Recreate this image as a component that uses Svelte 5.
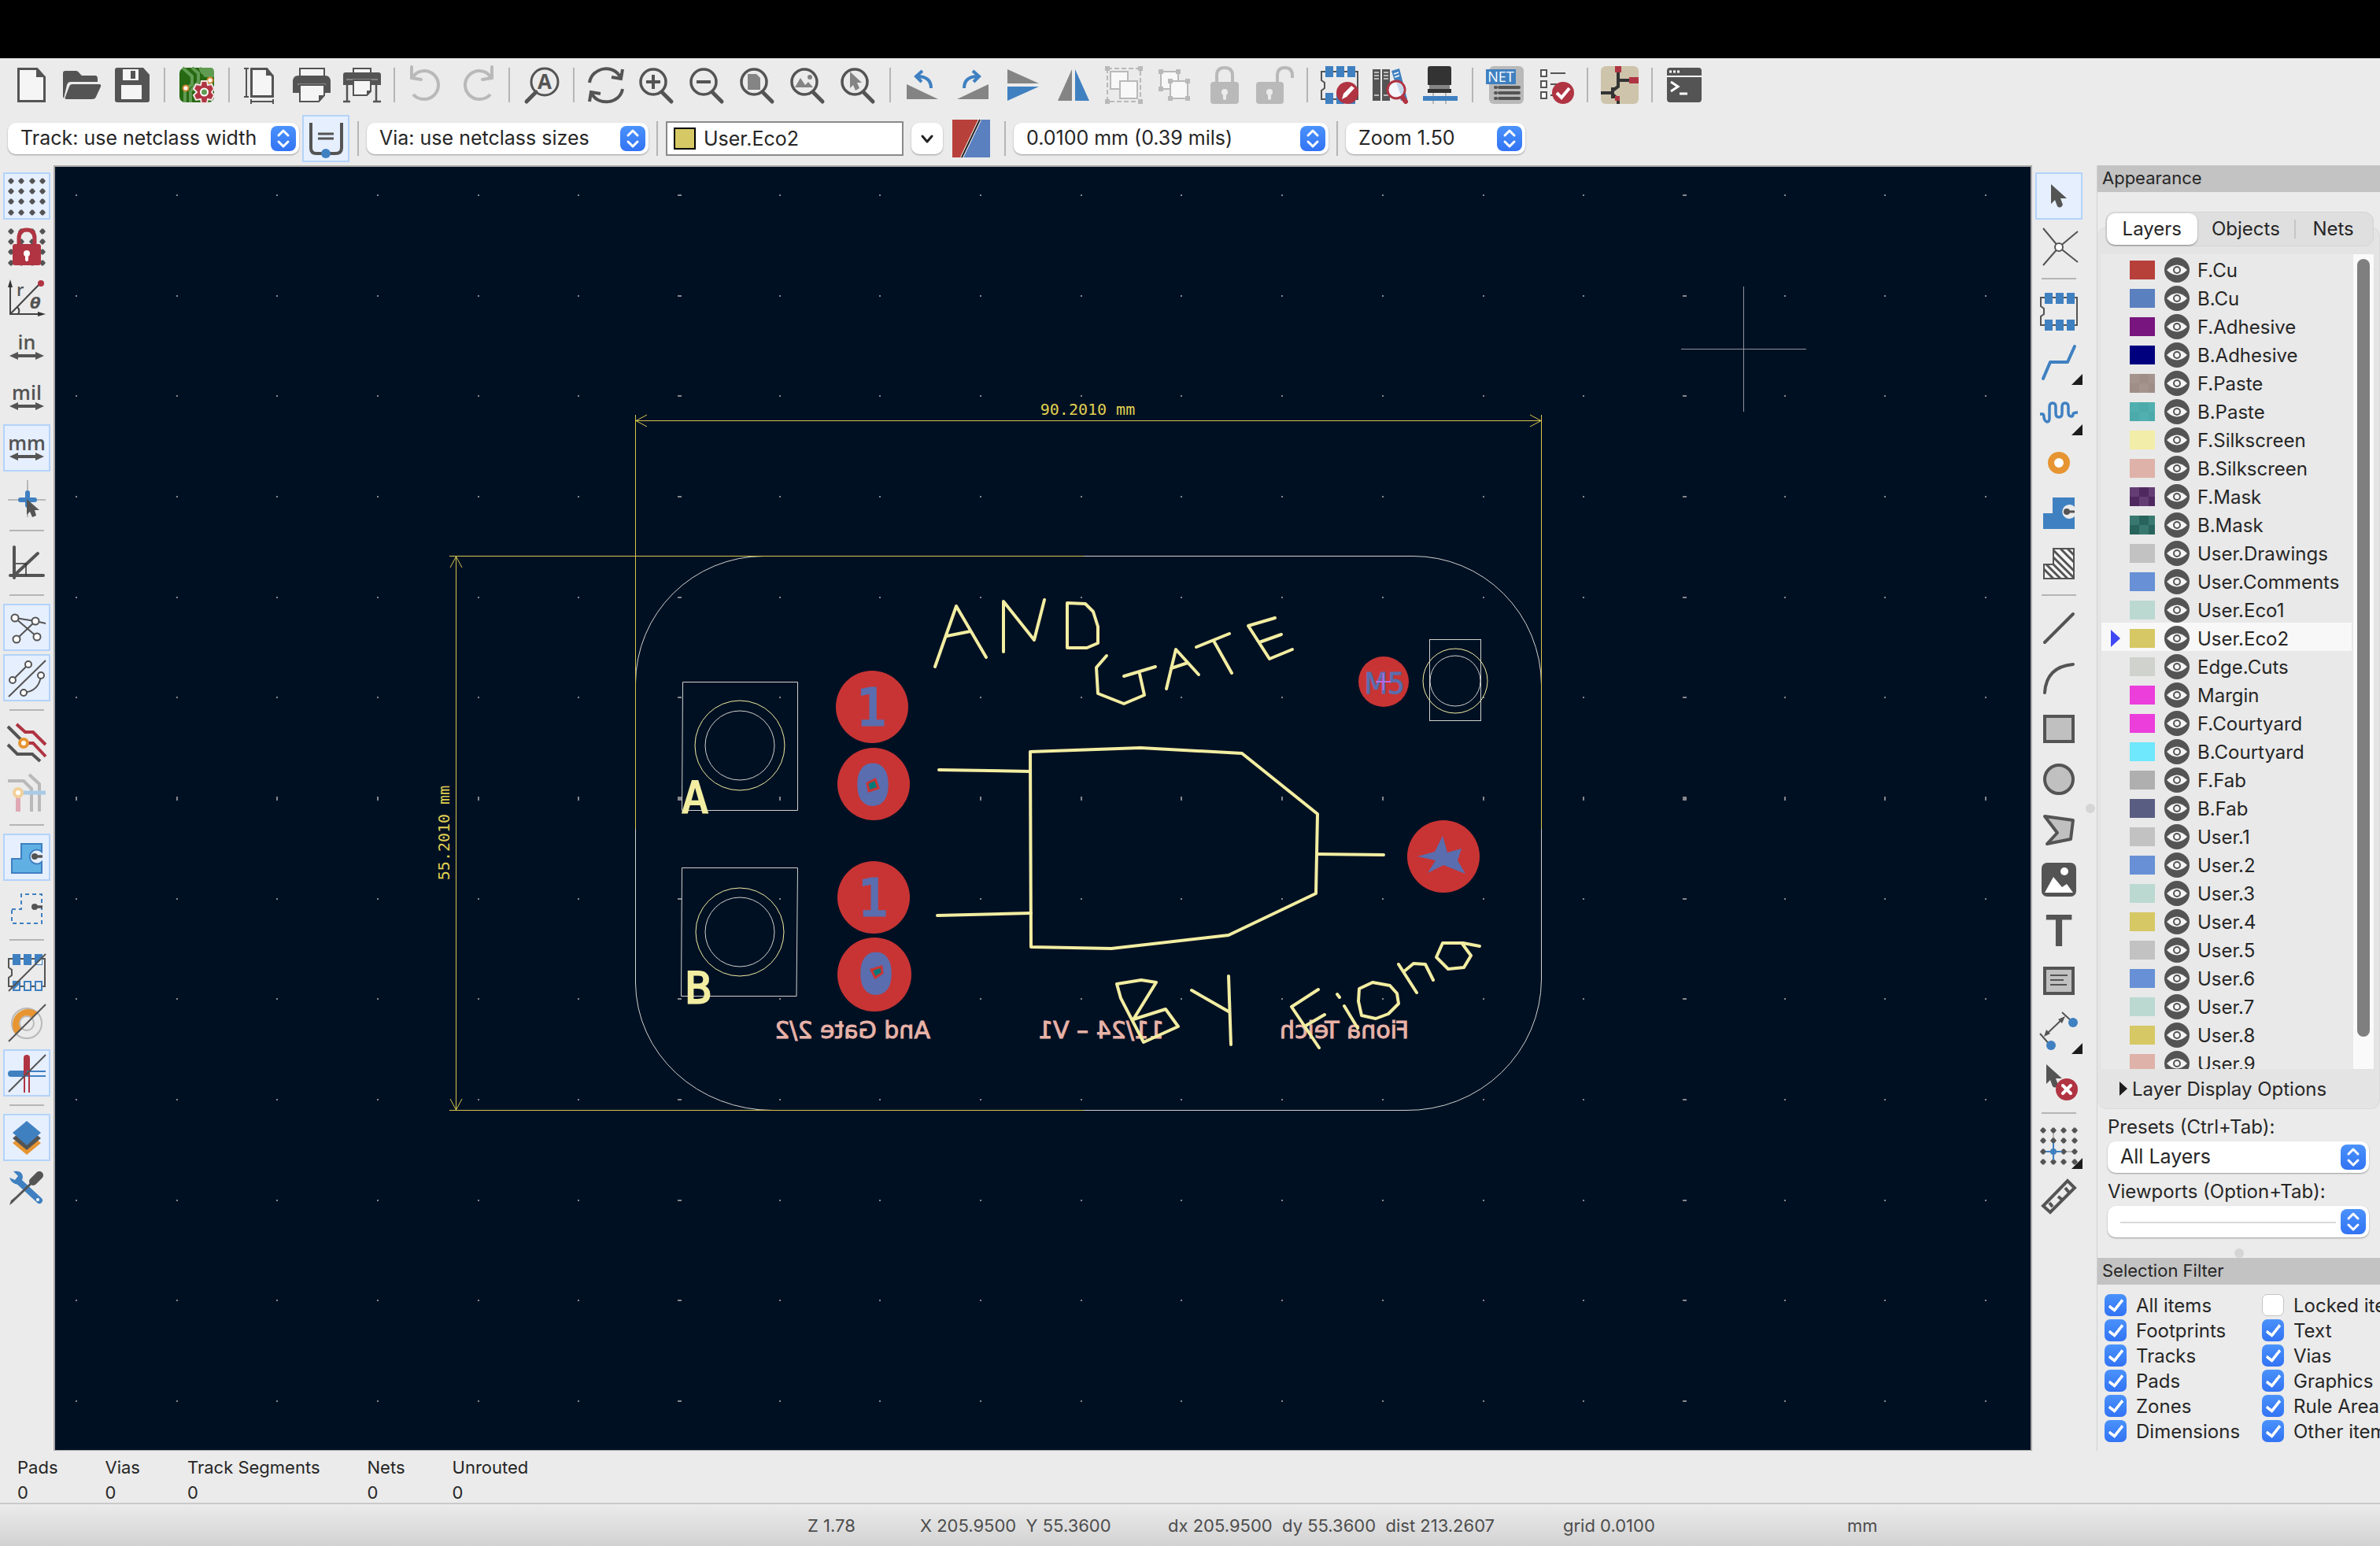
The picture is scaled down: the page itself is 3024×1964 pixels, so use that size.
<script lang="ts">
	type Item = { icon?: string; label?: string; active?: boolean; disabled?: boolean; more?: boolean; sep?: boolean };

	const sep: Item = { sep: true };

	const D = '#545454';
	const B = '#3f80c1';
	const R = '#b03442';
	const O = '#e69532';
	const G = '#b9b9b9';
	const M = '#848484';

	const lens = `<circle cx="20" cy="20" r="16" fill="none" stroke="${D}" stroke-width="3.5"/><path d="M31 33L43 45" stroke="${D}" stroke-width="5" stroke-linecap="round"/>`;
	const unitArrow = `<path d="M10 35H38" stroke="${D}" stroke-width="4"/><path d="M2 35L13 30V40ZM46 35L35 30V40Z" fill="${D}"/>`;
	const unit = (name: string) =>
		`<text x="24" y="27" text-anchor="middle" font-family="Open Sans, sans-serif" font-weight="600" font-size="25" fill="${D}">${name}</text>${unitArrow}`;
	const dots = (xs: number[], ys: number[]) =>
		ys.map((y) => xs.map((x) => `<path d="M${x - 4} ${y}L${x - 1} ${y - 3.5}H${x + 1}L${x + 4} ${y}L${x + 1} ${y + 3.5}H${x - 1}Z" fill="${D}"/>`).join('')).join('');
	const pins = (y: number, h: number, hollow = false) =>
		[6, 20, 34]
			.map((x) =>
				hollow
					? `<rect x="${x + 1}" y="${y + 1}" width="8" height="${h - 2}" fill="#ebebeb" stroke="${B}" stroke-width="2"/>`
					: `<rect x="${x}" y="${y}" width="10" height="${h}" fill="${B}"/>`
			)
			.join('');
	const chip = `<path d="M1 7H47V42H1V31L5 28V21L1 18Z" fill="none" stroke="${D}" stroke-width="2"/>`;
	const corners = (x: number, y: number, w: number, h: number) =>
		[[x, y], [x + w, y], [x, y + h], [x + w, y + h]].map(([a, b]) => `<rect x="${a - 3}" y="${b - 3}" width="6" height="6" fill="${G}"/>`).join('');
	const arrowHead = (x: number, y: number) =>
		`<path d="M${x} ${y}L${x + 20} ${y + 18}H${x + 12}L${x + 15} ${y + 26}Q${x + 12} ${y + 32} ${x + 8} ${y + 28}L${x + 5} ${y + 20}L${x} ${y + 25}Z" fill="${D}"/>`;

	const icons: Record<string, string> = {
		new: `<path d="M7.500 3.500H31L40.500 14V44.500H7.500Z" fill="#f5f5f5" stroke="${D}" stroke-width="3"/><path d="M30 2L42 14H30Z" fill="${D}"/>`,
		open: `<path d="M0 39V9Q0 6 3 6H17Q19 6 21 9L24 12H41Q44 12 44 16V20H10Q6 20 5 24L1 41Z" fill="${D}"/><path d="M12 23H46Q49 23 48 26L42 39Q41 42 37 42H4Q2 42 3 39L8 26Q9 23 12 23Z" fill="${D}"/>`,
		save: `<path d="M2 5Q2 2 5 2H38L46 11V43Q46 46 43 46H5Q2 46 2 43Z" fill="${D}"/><path d="M12 4H32V18H12ZM10 24H36V42H10Z" fill="#f5f5f5"/><rect x="22" y="6" width="6" height="10" fill="${D}"/>`,
		board: `<rect x="2" y="2" width="44" height="44" rx="7" fill="#276812"/><path d="M6 2L18 13V23L9 30V46M18 2L26 9V20L16 32V46M28 2L31 8H46" fill="none" stroke="#5f9b51" stroke-width="4"/><path d="M30 2H42Q46 2 46 8V14H34L30 9Z" fill="#5f9b51"/><circle cx="10" cy="28" r="3.500" fill="#fff" stroke="#d38a35" stroke-width="2"/><circle cx="41" cy="18" r="3.500" fill="#fff" stroke="#d38a35" stroke-width="2"/><path d="M30 19H37L38 24L43 23L46 29L43 33L46 37L43 43L38 42L37 47H30L29 42L23 43L20 37L24 33L20 29L23 23L29 24Z" fill="${R}" stroke="#f0e4e4" stroke-width="2"/><circle cx="33.500" cy="33" r="4.500" fill="#5f9b51" stroke="#fff" stroke-width="2"/>`,
		pageSettings: `<path d="M11.500 3.500H31L38.500 13V38.500H11.500Z" fill="#f5f5f5" stroke="${D}" stroke-width="3"/><path d="M30 2L40 12H30Z" fill="${D}"/><path d="M2 3H8M5 3V39M2 39H8M11 42V48M11 45H39M39 42V48" stroke="${D}" stroke-width="2"/>`,
		print: `<rect x="9" y="3" width="31" height="14" fill="#f5f5f5" stroke="${D}" stroke-width="2"/><path d="M0 20Q0 12 7 12H41Q48 12 48 20V34H0Z" fill="${D}"/><path d="M6 23H42" stroke="${M}" stroke-width="2"/><path d="M9 24H40V37L33 45H9Z" fill="#f5f5f5" stroke="${D}" stroke-width="2"/><path d="M33 45V37H40Z" fill="${D}"/>`,
		plot: `<path d="M13 9V3H35V9" fill="#f5f5f5" stroke="${D}" stroke-width="2"/><path d="M0 11Q0 8 3 8H45Q48 8 48 11V24H0Z" fill="${D}"/><path d="M4 17H44" stroke="${M}" stroke-width="2"/><path d="M13 18H35V32L30 37H13Z" fill="#f5f5f5" stroke="${D}" stroke-width="2"/><path d="M30 38V31H36Z" fill="${D}"/><path d="M5 24V45M42 24V45M0 45H9M38 45H48" stroke="${D}" stroke-width="2.500"/>`,
		undo: `<path d="M6 15Q11 6 21 6A18 18 0 0 1 21 42Q12 42 7 36" fill="none" stroke="${G}" stroke-width="4"/><path d="M5 1V15L17 17" fill="none" stroke="${G}" stroke-width="4" stroke-linecap="round"/>`,
		redo: `<path d="M42 15Q37 6 27 6A18 18 0 0 0 27 42Q36 42 41 36" fill="none" stroke="${G}" stroke-width="4"/><path d="M43 1V15L31 17" fill="none" stroke="${G}" stroke-width="4" stroke-linecap="round"/>`,
		find: `<circle cx="28" cy="20" r="17" fill="none" stroke="${D}" stroke-width="3"/><path d="M17 33L5 45" stroke="${D}" stroke-width="5" stroke-linecap="round"/><text x="28" y="29" text-anchor="middle" font-family="Open Sans, sans-serif" font-weight="700" font-size="26" fill="${D}">A</text>`,
		refresh: `<path d="M3 21C6 1 34 -3 42 14M45 29C42 48 14 51 6 35" fill="none" stroke="${D}" stroke-width="4"/><path d="M45 4L43 16L31 14M3 45L5 33L17 35" fill="none" stroke="${D}" stroke-width="4"/>`,
		zoomIn: `${lens}<path d="M11 20H29M20 11V29" stroke="${D}" stroke-width="4"/>`,
		zoomOut: `${lens}<path d="M11 20H29" stroke="${D}" stroke-width="4"/>`,
		zoomPage: `${lens}<path d="M12 10H23L28 15V30H12Z" fill="${M}"/>`,
		zoomObjects: `${lens}<circle cx="27" cy="14" r="3" fill="${M}"/><path d="M8 27L15 15L21 24L25 20L31 27Z" fill="${M}"/>`,
		zoomSelection: `${lens}<path d="M14 7L29 21H23L26 28L21 31L18 24L14 28Z" fill="${M}"/>`,
		rotateCcw: `<path d="M4 23L44 42H4Z" fill="${M}"/><path d="M35 28C35 17 28 13 17 13M24 6L16 13L23 20" fill="none" stroke="${B}" stroke-width="4"/>`,
		rotateCw: `<path d="M44 23L4 42H44Z" fill="${M}"/><path d="M13 28C13 17 20 13 31 13M24 6L32 13L25 20" fill="none" stroke="${B}" stroke-width="4"/>`,
		mirrorV: `<path d="M4 4L44 22H4Z" fill="${M}"/><path d="M4 26H44L4 44Z" fill="${B}"/>`,
		mirrorH: `<path d="M22 4V44H4Z" fill="${M}"/><path d="M26 4L44 44H26Z" fill="${B}"/>`,
		group: `<rect x="3" y="3" width="42" height="42" fill="none" stroke="${G}" stroke-width="2" stroke-dasharray="6 3"/>${corners(3, 3, 42, 42)}<rect x="7" y="7" width="22" height="22" fill="#f8f8f8" stroke="${G}" stroke-width="2"/><rect x="19" y="19" width="22" height="22" fill="#f8f8f8" stroke="${G}" stroke-width="2"/>`,
		ungroup: `<rect x="7" y="7" width="22" height="22" fill="#f8f8f8" stroke="${G}" stroke-width="2"/>${corners(7, 7, 22, 22)}<rect x="19" y="19" width="22" height="22" fill="#f8f8f8" stroke="${G}" stroke-width="2"/>${corners(19, 19, 22, 22)}`,
		lock: `<path d="M14 22V12Q14 2 24 2T34 12V22" fill="none" stroke="${G}" stroke-width="4"/><rect x="6" y="20" width="36" height="28" rx="4" fill="${G}"/><circle cx="24" cy="33" r="4" fill="#ebebeb"/><path d="M24 33V41" stroke="#ebebeb" stroke-width="4" stroke-linecap="round"/>`,
		unlock: `<path d="M27 22V12Q27 2 36.500 2T46 12V15" fill="none" stroke="${G}" stroke-width="4"/><rect x="0" y="20" width="35" height="28" rx="4" fill="${G}"/><circle cx="17" cy="33" r="4" fill="#ebebeb"/><path d="M17 33V41" stroke="#ebebeb" stroke-width="4" stroke-linecap="round"/>`,
		footprintEditor: `${chip}${pins(0, 14)}${pins(34, 14)}<circle cx="34" cy="34" r="14" fill="${R}"/><path d="M27 42L29 35L39 25L43 28L33 39Z" fill="#fff"/>`,
		footprintBrowser: `<path d="M2 4H12V44H2ZM14 4H24V44H14Z" fill="${D}"/><path d="M4 8H10M4 12H10M4 16H10M16 8H22M16 12H22M16 16H22M4 37H10M16 37H22" stroke="#ddd" stroke-width="1.500"/><path d="M26 6L36 3L46 42L38 44Z" fill="${B}"/><path d="M29 10L35 8M30 14L36 12" stroke="#fff" stroke-width="1.500"/><path d="M39 38L44 45" stroke="${R}" stroke-width="6" stroke-linecap="round"/><circle cx="32" cy="30" r="11" fill="#f4f6fa" stroke="${R}" stroke-width="3"/><path d="M32 21A9 9 0 0 1 38 37Z" fill="#c4d8ec"/>`,
		viewer3d: `<path d="M8 3Q8 0 11 0H35Q38 0 38 3V24H8Z" fill="#333"/><path d="M10 24H36V30H10Z" fill="${M}"/><path d="M8 29H38V34H8Z" fill="#333"/><path d="M15 34V48M31 34V48" stroke="${G}" stroke-width="2"/><rect x="2" y="38" width="44" height="6" fill="${B}"/>`,
		netUpdate: `<rect x="4" y="0" width="44" height="48" rx="6" fill="${G}"/><rect x="0" y="4" width="38" height="19" fill="${B}"/><text x="19" y="20" text-anchor="middle" font-family="Open Sans, sans-serif" font-size="18" fill="#fff">NET</text><path d="M17 27H42M17 34H42M17 41H42M12 27H13M12 34H13M12 41H13" stroke="${D}" stroke-width="4" stroke-linecap="round"/>`,
		drc: `<path d="M6 5H13V13H6ZM6 19H13V27H6ZM6 33H13V41H6Z" fill="#fff" stroke="${D}" stroke-width="2"/><path d="M18 9H37M18 23H30M18 37H24" stroke="${D}" stroke-width="2"/><circle cx="34" cy="34" r="14" fill="${R}"/><path d="M26 34L32 40L42 28" fill="none" stroke="#fff" stroke-width="4"/>`,
		schematic: `<rect width="48" height="48" rx="6" fill="#cdc4ab"/><path d="M22 6V18H38M22 18V26L15 31V36L22 42V48M0 34H15M15 27V41" fill="none" stroke="#333" stroke-width="4"/><path d="M18 0H26V8H18ZM36 14H48V22H36ZM18 38H24V44H18Z" fill="${R}"/>`,
		console: `<rect x="2" y="2" width="44" height="44" rx="4" fill="${D}"/><path d="M2 13H46" stroke="#fff" stroke-width="2"/><path d="M5 7H8M10 7H13M15 7H18" stroke="#fff" stroke-width="3"/><path d="M7 20L16 26L7 32M18 35H28" fill="none" stroke="#fff" stroke-width="3"/>`,
		autoWidth: `<path d="M5 4V36Q5 43 12 43H36Q44 43 44 36V4" fill="none" stroke="${D}" stroke-width="4"/><path d="M14 18H34M14 24H34" stroke="${D}" stroke-width="3"/><circle cx="24" cy="43" r="6" fill="${B}"/>`,
		layerPair: `<path d="M0 0H35L12 48H0Z" fill="#b8403a"/><path d="M35 0H48V48H12Z" fill="#5a80c0"/><path d="M35 0L12 48" stroke="#fff" stroke-width="4"/><path d="M35 0L12 48" stroke="#222" stroke-width="2"/>`,
		grid: dots([4, 17, 31, 44], [5, 18, 31, 45]),
		gridLock: `${dots([4, 17, 31, 44], [5, 18, 31, 45])}<path d="M14 24V14Q14 3 24 3T34 14V24" fill="none" stroke="${R}" stroke-width="5"/><rect x="6" y="21" width="36" height="27" rx="3" fill="${R}"/><circle cx="24" cy="33" r="4" fill="#fff"/><path d="M24 33V41" stroke="#fff" stroke-width="4" stroke-linecap="round"/>`,
		polar: `<path d="M3 8V46H42M3 46L41 7M13 46Q16 41 12 37" fill="none" stroke="#444" stroke-width="2"/><path d="M3 2L6 12H0ZM48 46L38 43V49Z" fill="#333"/><circle cx="42" cy="7" r="4" fill="${R}"/><text x="11" y="23" font-family="Open Sans, sans-serif" font-weight="600" font-size="22" fill="${D}">r</text><text x="28" y="39" font-family="DejaVu Sans, sans-serif" font-style="italic" font-weight="700" font-size="20" fill="${D}">θ</text>`,
		inch: unit('in'),
		mil: unit('mil'),
		mm: unit('mm'),
		cursor: `<path d="M0 26H48M25 1V48" stroke="${G}" stroke-width="2"/><path d="M16 26H34M25 17V33" stroke="${B}" stroke-width="6" stroke-linecap="round"/><path d="M24 25L40 39H34L36 46L31 48L28 41L24 45Z" fill="${D}"/>`,
		angle: `<path d="M8 4V43M3 40H45M8 40L38 12" fill="none" stroke="${D}" stroke-width="4" stroke-linecap="round"/><path d="M10 25H23V40" fill="none" stroke="#333" stroke-width="1.500"/>`,
		ratsnest: `<path d="M9 12L35 16L48 19M9 12L37 36M11 39L35 16" fill="none" stroke="${D}" stroke-width="2"/><g fill="#fff" stroke="${D}" stroke-width="2"><circle cx="9" cy="12" r="4.500"/><circle cx="35" cy="16" r="4.500"/><circle cx="11" cy="39" r="4.500"/><circle cx="37" cy="36" r="4.500"/></g>`,
		ratsnestCurved: `<path d="M26 7L6 27M1 48L48 2M42 21Q40 41 20 43" fill="none" stroke="${D}" stroke-width="2"/><g fill="#fff" stroke="${D}" stroke-width="2"><circle cx="26" cy="7" r="4"/><circle cx="6" cy="27" r="4"/><circle cx="42" cy="21" r="4"/><circle cx="20" cy="43" r="4"/></g>`,
		highlightNet: `<path d="M11 1L22 11H32L48 27M20 25H32L48 42" fill="none" stroke="${R}" stroke-width="4"/><path d="M0 4L17 21M0 27L12 39H31L41 48" fill="none" stroke="${D}" stroke-width="4"/><circle cx="20" cy="25" r="5" fill="#fff" stroke="${O}" stroke-width="4"/>`,
		localNets: `<path d="M0 9H20L30 19V48M27 1L40 13V48" fill="none" stroke="${G}" stroke-width="4"/><path d="M13 24H48" stroke="#a9cbe8" stroke-width="5"/><path d="M13 28V48" stroke="#dfa9b3" stroke-width="6"/><circle cx="13" cy="24" r="5" fill="#fff" stroke="#f3d09b" stroke-width="4"/>`,
		zoneFill: `<path d="M5 26H17V7H43V17A9 9 0 1 0 43 30V44H5Z" fill="#60b0e4" stroke="${B}" stroke-width="2"/><circle cx="34" cy="23" r="4" fill="${D}"/><path d="M34 23H44" stroke="${D}" stroke-width="3.500"/>`,
		zoneOutline: `<path d="M5 26H17V7H43V44H5Z" fill="none" stroke="${B}" stroke-width="2" stroke-dasharray="5 4"/><circle cx="34" cy="23" r="4" fill="${D}"/><path d="M34 23H44" stroke="${D}" stroke-width="3.500"/>`,
		padSketch: `${chip}${pins(1, 14)}${pins(35, 13, true)}<path d="M36 14L43 7V14Z" fill="#fff"/><path d="M8 46L14 40V36H8Z" fill="${B}"/><path d="M1 48L48 1" stroke="${D}" stroke-width="2"/>`,
		viaSketch: `<circle cx="24" cy="25" r="19" fill="none" stroke="${G}" stroke-width="2"/><circle cx="24" cy="25" r="9" fill="none" stroke="${G}" stroke-width="2"/><path d="M10 39A20 20 0 0 1 38 11L31 18A9 9 0 0 0 17 32Z" fill="${O}"/><path d="M1 48L48 1" stroke="${D}" stroke-width="2"/>`,
		trackSketch: `<path d="M4 25H22" stroke="${B}" stroke-width="8" stroke-linecap="round"/><path d="M24 5V24" stroke="${R}" stroke-width="8" stroke-linecap="round"/><path d="M24 22H48M24 28H48" stroke="${B}" stroke-width="2"/><path d="M21 22V49M27 22V49" stroke="${R}" stroke-width="2"/><path d="M1 48L48 1" stroke="${D}" stroke-width="2"/>`,
		layers: `<path d="M24 17L42 31L24 46L6 31Z" fill="${O}"/><path d="M24 10L42 25L24 40L6 25Z" fill="${D}"/><path d="M24 3L42 18L24 34L6 18Z" fill="${B}"/>`,
		tools: `<path d="M14 16L40 40" stroke="${B}" stroke-width="8" stroke-linecap="round"/><path d="M7 3Q18 1 19 10L17 19Q6 22 2 11L9 14L13 9Z" fill="${B}"/><circle cx="38" cy="39" r="2" fill="#fff"/><path d="M31 17L9 38" stroke="${D}" stroke-width="3"/><path d="M32 16L40 8" stroke="${D}" stroke-width="10" stroke-linecap="round"/><path d="M2 46L4 40L9 36L10 39L6 43Z" fill="${D}"/>`,
		select: arrowHead(14, 9),
		localRatsnest: `<path d="M4 1L24 25L48 5M4 48L24 25L48 44" fill="none" stroke="${D}" stroke-width="2"/><circle cx="24" cy="25" r="5" fill="#fff" stroke="${D}" stroke-width="2"/>`,
		footprint: `${chip}${pins(1, 14)}${pins(35, 14)}`,
		route: `<path d="M4 46L13 25H35L44 5" fill="none" stroke="${B}" stroke-width="4" stroke-linejoin="round" stroke-linecap="round"/>`,
		tune: `<path d="M0 27H3Q5 27 5 31T9 37Q12 37 12 32V18Q12 13 16 13T20 18V26Q20 31 24 31T28 26V18Q28 13 32 13T36 18V25Q36 30 40 30Q42 30 42 27Q42 25 48 25" fill="none" stroke="${B}" stroke-width="3.500"/>`,
		via: `<circle cx="24" cy="25" r="10" fill="#fff" stroke="${O}" stroke-width="8"/>`,
		zone: `<path d="M4 25H16V5H44V17A9 9 0 1 0 44 29V45H4Z" fill="${B}"/><circle cx="34" cy="23" r="4" fill="${D}"/><path d="M34 23H44" stroke="${D}" stroke-width="3"/>`,
		ruleArea: `<path d="M5 26H17V6H43V44H5Z" fill="#f5f5f5"/><path d="M17 8L43 34M26 6L43 23M35 6L43 14M17 17L43 43M17 26L35 44M8 26L26 44M5 32L17 44" stroke="${D}" stroke-width="3"/><path d="M5 26H17V6H43V44H5Z" fill="none" stroke="${D}" stroke-width="2"/>`,
		line: `<path d="M6 43L42 7" stroke="${D}" stroke-width="4" stroke-linecap="round"/>`,
		arc: `<path d="M6 43Q8 10 42 7" fill="none" stroke="${D}" stroke-width="4" stroke-linecap="round"/>`,
		rect: `<rect x="6" y="9" width="36" height="32" fill="#c0c0c0" stroke="${D}" stroke-width="4"/>`,
		circle: `<circle cx="24" cy="25" r="18" fill="#c0c0c0" stroke="${D}" stroke-width="4"/>`,
		polygon: `<path d="M6 8L42 13L39 37L9 43L22 29Z" fill="#c0c0c0" stroke="${D}" stroke-width="4" stroke-linejoin="round"/>`,
		image: `<rect x="2" y="3" width="44" height="43" rx="7" fill="${D}"/><circle cx="31" cy="14" r="5" fill="#fff"/><path d="M6 41L17 21L28 34L34 30L42 41Z" fill="#fff"/>`,
		text: `<text x="24" y="45" text-anchor="middle" font-family="Roboto, sans-serif" font-weight="700" font-size="56" fill="${D}">T</text>`,
		textbox: `<rect x="6" y="9" width="36" height="32" fill="#c0c0c0" stroke="${D}" stroke-width="4"/><path d="M13 18H35M13 24H30M13 30H34" stroke="${D}" stroke-width="2"/>`,
		dimension: `<path d="M8 29L30 8M28 1L42 14M0 28L13 43" stroke="${D}" stroke-width="2"/><path d="M32 6L28 15L23 10ZM5 32L8 23L13 28Z" fill="${D}"/><circle cx="42" cy="14" r="6" fill="${B}"/><circle cx="14" cy="43" r="6" fill="${B}"/>`,
		remove: `${arrowHead(8, 3)}<circle cx="34" cy="35" r="14" fill="${R}"/><path d="M29 30L39 40M39 30L29 40" stroke="#fff" stroke-width="4" stroke-linecap="round"/>`,
		gridOrigin: `<path d="M17 5V45M4 32H44" stroke="${G}" stroke-width="2"/>${dots([4, 17, 30, 44], [5, 18, 32, 45])}<path d="M17 21V43M7 32H28" stroke="${B}" stroke-width="2"/><circle cx="17" cy="32" r="4" fill="${B}"/>`,
		measure: `<path d="M4 37L35 5L44 14L13 45Z" fill="none" stroke="${D}" stroke-width="4"/><path d="M12 33L16 38M23 25L28 29M32 14L37 20" stroke="${D}" stroke-width="4"/>`
	};

	const topTools: Item[] = [
		{ icon: 'new', label: 'New board' },
		{ icon: 'open', label: 'Open' },
		{ icon: 'save', label: 'Save' },
		sep,
		{ icon: 'board', label: 'Board setup' },
		sep,
		{ icon: 'pageSettings', label: 'Page settings' },
		{ icon: 'print', label: 'Print' },
		{ icon: 'plot', label: 'Plot' },
		sep,
		{ icon: 'undo', label: 'Undo', disabled: true },
		{ icon: 'redo', label: 'Redo', disabled: true },
		sep,
		{ icon: 'find', label: 'Find' },
		sep,
		{ icon: 'refresh', label: 'Refresh' },
		{ icon: 'zoomIn', label: 'Zoom in' },
		{ icon: 'zoomOut', label: 'Zoom out' },
		{ icon: 'zoomPage', label: 'Zoom to fit' },
		{ icon: 'zoomObjects', label: 'Zoom to objects' },
		{ icon: 'zoomSelection', label: 'Zoom to selection' },
		sep,
		{ icon: 'rotateCcw', label: 'Rotate counterclockwise' },
		{ icon: 'rotateCw', label: 'Rotate clockwise' },
		{ icon: 'mirrorV', label: 'Mirror vertically' },
		{ icon: 'mirrorH', label: 'Mirror horizontally' },
		{ icon: 'group', label: 'Group', disabled: true },
		{ icon: 'ungroup', label: 'Ungroup', disabled: true },
		{ icon: 'lock', label: 'Lock', disabled: true },
		{ icon: 'unlock', label: 'Unlock', disabled: true },
		sep,
		{ icon: 'footprintEditor', label: 'Footprint editor' },
		{ icon: 'footprintBrowser', label: 'Footprint browser' },
		{ icon: 'viewer3d', label: '3D viewer' },
		sep,
		{ icon: 'netUpdate', label: 'Update from schematic' },
		{ icon: 'drc', label: 'Design rules checker' },
		sep,
		{ icon: 'schematic', label: 'Schematic editor' },
		sep,
		{ icon: 'console', label: 'Scripting console' }
	];

	const leftTools: Item[] = [
		{ icon: 'grid', label: 'Show grid', active: true },
		{ icon: 'gridLock', label: 'Grid overrides' },
		{ icon: 'polar', label: 'Polar coordinates' },
		{ icon: 'inch', label: 'Inches' },
		{ icon: 'mil', label: 'Mils' },
		{ icon: 'mm', label: 'Millimeters', active: true },
		{ icon: 'cursor', label: 'Full-window crosshair' },
		sep,
		{ icon: 'angle', label: 'Constrain angle' },
		sep,
		{ icon: 'ratsnest', label: 'Show ratsnest', active: true },
		{ icon: 'ratsnestCurved', label: 'Curved ratsnest', active: true },
		sep,
		{ icon: 'highlightNet', label: 'Inactive layer mode' },
		{ icon: 'localNets', label: 'Net highlighting' },
		sep,
		{ icon: 'zoneFill', label: 'Show filled zones', active: true },
		{ icon: 'zoneOutline', label: 'Show zone outlines' },
		sep,
		{ icon: 'padSketch', label: 'Sketch pads' },
		{ icon: 'viaSketch', label: 'Sketch vias' },
		{ icon: 'trackSketch', label: 'Sketch tracks', active: true },
		sep,
		{ icon: 'layers', label: 'Appearance manager', active: true },
		{ icon: 'tools', label: 'Properties' }
	];

	const rightTools: Item[] = [
		{ icon: 'select', label: 'Select', active: true },
		{ icon: 'localRatsnest', label: 'Local ratsnest' },
		sep,
		{ icon: 'footprint', label: 'Place footprint' },
		{ icon: 'route', label: 'Route tracks', more: true },
		{ icon: 'tune', label: 'Tune length', more: true },
		{ icon: 'via', label: 'Place via' },
		{ icon: 'zone', label: 'Draw zone' },
		{ icon: 'ruleArea', label: 'Draw rule area' },
		sep,
		{ icon: 'line', label: 'Draw line' },
		{ icon: 'arc', label: 'Draw arc' },
		{ icon: 'rect', label: 'Draw rectangle' },
		{ icon: 'circle', label: 'Draw circle' },
		{ icon: 'polygon', label: 'Draw polygon' },
		{ icon: 'image', label: 'Place image' },
		{ icon: 'text', label: 'Place text' },
		{ icon: 'textbox', label: 'Place text box' },
		{ icon: 'dimension', label: 'Add dimension', more: true },
		{ icon: 'remove', label: 'Delete' },
		sep,
		{ icon: 'gridOrigin', label: 'Set grid origin', more: true },
		{ icon: 'measure', label: 'Measure' }
	];

	const layers: [string, string, string?][] = [
		['F.Cu', '#b8403a'],
		['B.Cu', '#5a80c0'],
		['F.Adhesive', '#78157f'],
		['B.Adhesive', '#00007f'],
		['F.Paste', '#a5948d', '#9f8e87'],
		['B.Paste', '#50b0b0', '#4caaaa'],
		['F.Silkscreen', '#f2eda8'],
		['B.Silkscreen', '#dfb2a9'],
		['F.Mask', '#653d75', '#502860'],
		['B.Mask', '#387870', '#28645c'],
		['User.Drawings', '#c2c2c2'],
		['User.Comments', '#6790d6'],
		['User.Eco1', '#bbd9d1'],
		['User.Eco2', '#d6c864'],
		['Edge.Cuts', '#d0d2cd'],
		['Margin', '#eb3edb'],
		['F.Courtyard', '#eb3edb'],
		['B.Courtyard', '#6fe7fc'],
		['F.Fab', '#afafaf'],
		['B.Fab', '#5a5d82'],
		['User.1', '#c2c2c2'],
		['User.2', '#6790d6'],
		['User.3', '#bbd9d1'],
		['User.4', '#d6c864'],
		['User.5', '#c2c2c2'],
		['User.6', '#6790d6'],
		['User.7', '#bbd9d1'],
		['User.8', '#d6c864'],
		['User.9', '#dfb2a9']
	];

	const filters: [string, boolean][] = [
		['All items', true],
		['Locked items', false],
		['Footprints', true],
		['Text', true],
		['Tracks', true],
		['Vias', true],
		['Pads', true],
		['Graphics', true],
		['Zones', true],
		['Rule Areas', true],
		['Dimensions', true],
		['Other items', true]
	];

	const counts = ['Pads', 'Vias', 'Track Segments', 'Nets', 'Unrouted'];

	// grid points, every tenth line is drawn heavier
	const gridPoints = Array.from({ length: 20 * 13 }, (_, n) => {
		const col = n % 20;
		const row = Math.floor(n / 20);
		return {
			x: Math.round(97 + col * 127.68),
			y: Math.round(248 + row * 127.65),
			w: col % 10 === 6 ? 5 : 2,
			h: row === 6 ? 5 : 2
		};
	});

	let activeLayer = 'User.Eco2';
	let activeTab = 'Layers';
</script>

{#snippet tool(item: Item)}
	{#if item.sep}
		<span class="sep"></span>
	{:else}
		<button class="tool" class:active={item.active} aria-label={item.label} disabled={item.disabled}>
			<svg viewBox="0 0 48 48">{@html icons[item.icon ?? '']}</svg>
			{#if item.more}<i class="more"></i>{/if}
		</button>
	{/if}
{/snippet}

{#snippet picker(label: string, value: string, size: string)}
	<span class="picker {size}">
		<select aria-label={label}>
			<option>{value}</option>
		</select>
		<svg class="stepper" viewBox="0 0 32 32">
			<path d="M10 12L16 6L22 12M10 20L16 26L22 20" />
		</svg>
	</span>
{/snippet}

<div class="app">
	<div class="notch"></div>

	<header class="toolbar">
		{#each topTools as item}{@render tool(item)}{/each}
	</header>

	<div class="toolbar settings">
		{@render picker('Track width', 'Track: use netclass width', 'track')}
		{@render tool({ icon: 'autoWidth', label: 'Use existing track width', active: true })}
		<span class="sep"></span>
		{@render picker('Via size', 'Via: use netclass sizes', 'via')}
		<span class="sep"></span>
		<div class="combo">
			<label class="combo-box">
				<span class="combo-swatch"></span>
				<input type="text" aria-label="Active layer" readonly value={activeLayer} />
			</label>
			<button class="combo-arrow" aria-label="Choose layer">
				<svg viewBox="0 0 40 40"><path d="M14 17L20 24L26 17" /></svg>
			</button>
		</div>
		<button class="tool pair" aria-label="Layer pair"><svg viewBox="0 0 48 48">{@html icons.layerPair}</svg></button>
		<span class="sep"></span>
		{@render picker('Grid', '0.0100 mm (0.39 mils)', 'grid')}
		<span class="sep"></span>
		{@render picker('Zoom', 'Zoom 1.50', 'zoom')}
	</div>

	<div class="main">
		<nav class="side left">
			{#each leftTools as item}{@render tool(item)}{/each}
		</nav>

		<main class="canvas">
			<svg viewBox="70 212 2510 1630" preserveAspectRatio="xMinYMin slice">
				{#each gridPoints as p}
					<rect x={p.x - Math.floor(p.w / 2)} y={p.y - Math.floor(p.h / 2)} width={p.w} height={p.h} fill="#85888c" />
				{/each}

				<path d="M2136 443.500H2295M2215.500 364V523" stroke="#8f959d" />

				<!-- board edge -->
				<g class="edge">
					<path d="M970 706.500H1795A163 164 0 0 1 1958.500 870V1244A170 167 0 0 1 1786 1410.500H982A174 163 0 0 1 807.500 1249V868A163 162 0 0 1 970 706.500" />
					<path d="M867.500 866.500H1013.500V1029.500H866.500Z" />
					<circle cx="940" cy="947" r="44" />
					<path d="M866.500 1102.500H1013.500L1012 1265.500H865.500Z" />
					<circle cx="940" cy="1184" r="44" />
					<rect x="1816.500" y="812.500" width="65" height="103" />
					<circle cx="1849" cy="865" r="32" />
				</g>
				<g class="ring">
					<circle cx="940" cy="947" r="57" />
					<circle cx="940" cy="1184" r="56" />
					<circle cx="1849" cy="865" r="41" />
				</g>

				<!-- dimensions -->
				<g class="dim">
					<path d="M807.500 527V1053M1958.500 527V1053M807.500 534.500H1958.500M822 527L808 534.500L822 542M1944 527L1958 534.500L1944 542" />
					<path d="M571 706.500H1377M571 1410.500H1377M579.500 706.500V1410.500M572 721L579.500 707L587 721M572 1396L579.500 1410L587 1396" />
				</g>
				<text class="dim-text" x="1382" y="527">90.2010 mm</text>
				<text class="dim-text" transform="translate(571 1058) rotate(-90)">55.2010 mm</text>

				<!-- copper -->
				<g fill="#c83434">
					<circle cx="1108" cy="898" r="46" />
					<circle cx="1110" cy="996" r="46" />
					<circle cx="1110" cy="1140" r="46" />
					<circle cx="1111" cy="1238" r="47" />
					<circle cx="1758" cy="866" r="32" />
					<circle cx="1834" cy="1088" r="46" />
				</g>
				<g class="copper">
					<text x="1107" y="921">1</text>
					<text class="thick" x="1109" y="1016">0</text>
					<text x="1109" y="1163">1</text>
					<text class="thick" x="1113" y="1256">0</text>
					<text class="small" x="1759" y="881">M5</text>
					<path d="M1833 1062L1839 1083L1857 1078L1852 1093L1862 1110L1834 1099L1814 1109L1824 1093L1801 1088L1823 1082Z" />
				</g>
				<path d="M1112 990L1116 1001L1104 1005L1102 995ZM1120 1228L1121 1236L1112 1242L1107 1232Z" fill="#007a78" stroke="#c83434" stroke-width="3" />
				<path d="M1757.500 855V877M1748 866H1767" stroke="#b56be8" stroke-width="2" />

				<!-- back silkscreen, seen through the board -->
				<g class="back-silk">
					<text transform="translate(1083 1319) scale(-1 1)">And Gate 2/2</text>
					<text transform="translate(1399 1319) scale(-1 1)">11/24 – V1</text>
					<text transform="translate(1708 1319) scale(-1 1)">Fiona Teich</text>
				</g>

				<!-- front silkscreen -->
				<g class="silk">
					<path d="M1188 847L1215 770L1253 835M1203 808L1233 802" />
					<path d="M1275 828V764L1314 813L1327 762" />
					<path d="M1356 823V766L1379 767L1389 777L1395 796V817L1381 823Z" />
					<path d="M1406 833L1393 848L1395 881L1428 894L1454 883L1448 856M1428 859L1468 847" />
					<path d="M1482 875L1494 825L1523 857M1488 849L1509 842" />
					<path d="M1520 822L1562 805M1542 814L1565 855" />
					<path d="M1620 785L1586 795L1613 837L1642 825M1600 816L1628 806" />
					<path d="M1309 955L1449 950L1578 957L1674 1034L1672 1135L1561 1188L1412 1205L1310 1203Z" />
					<path d="M1193 978L1309 980M1191 1163L1310 1160M1674 1085L1758 1086" />
					<path d="M1419 1250L1450 1245L1469 1248L1440 1295L1481 1282L1497 1304L1453 1324L1424 1268Z" />
					<path d="M1514 1258L1561 1285M1561 1240L1564 1327" />
					<path d="M1675 1257L1641 1279L1676 1331M1659 1303L1683 1289" />
					<path d="M1708 1278L1725 1306M1699 1263L1702 1267" />
					<path d="M1744 1248L1766 1252L1775 1262L1777 1275L1764 1288L1748 1294L1730 1290L1726 1272L1727 1256Z" />
					<path d="M1777 1225L1800 1261M1784 1234L1796 1224L1811 1225L1821 1245" />
					<path d="M1880 1202L1859 1198H1833L1825 1216L1840 1231L1860 1229L1869 1214L1858 1199" />
				</g>
				<text class="ref" x="883" y="1032">A</text>
				<text class="ref" x="887" y="1274">B</text>
			</svg>
		</main>

		<nav class="side right">
			{#each rightTools as item}{@render tool(item)}{/each}
		</nav>

		<div class="sash"><i class="grip"></i></div>

		<aside class="panel">
			<h2>Appearance</h2>
			<section class="notebook">
				<div class="tabs" role="tablist">
					{#each ['Layers', 'Objects', 'Nets'] as tab}
						<button role="tab" aria-selected={activeTab === tab} on:click={() => (activeTab = tab)}>{tab}</button>
					{/each}
				</div>
				<div class="layers">
					<ul>
						{#each layers as [name, color, alt]}
							<li class:current={name === activeLayer}>
								<span class="marker"></span>
								<svg class="swatch" viewBox="0 0 32 24">
									<rect width="32" height="24" fill={color} />
									{#if alt}<path d="M12 0H24V12H12ZM0 12H12V24H0ZM24 12H32V24H24Z" fill={alt} />{/if}
								</svg>
								<svg class="eye" viewBox="0 0 32 32">
									<circle cx="16" cy="16" r="16" fill="#545454" />
									<path d="M3 16Q16 3 29 16Q16 29 3 16Z" fill="#f5f5f5" />
									<circle cx="16" cy="16" r="4" fill="none" stroke="#545454" stroke-width="2" />
								</svg>
								{name}
							</li>
						{/each}
					</ul>
					<div class="scroll"><div class="thumb"></div></div>
				</div>
				<button class="display-options"><i></i>Layer Display Options</button>
			</section>

			<div class="views">
				<span>Presets (Ctrl+Tab):</span>
				{@render picker('Presets', 'All Layers', 'wide')}
				<span>Viewports (Option+Tab):</span>
				<span class="viewport">
					{@render picker('Viewports', '', 'wide')}
					<i></i>
				</span>
			</div>

			<div class="row-sash"><i class="grip"></i></div>

			<h2>Selection Filter</h2>
			<div class="filters">
				{#each filters as [name, on]}
					<label><input type="checkbox" checked={on} />{name}</label>
				{/each}
			</div>
		</aside>
	</div>

	<section class="info">
		{#each counts as name}
			<div>{name}<br />0</div>
		{/each}
	</section>

	<footer>
		<span></span>
		<span>Z 1.78</span>
		<span>X 205.9500&nbsp; Y 55.3600</span>
		<span>dx 205.9500&nbsp; dy 55.3600&nbsp; dist 213.2607</span>
		<span>grid 0.0100</span>
		<span>mm</span>
	</footer>
</div>

<style>
	:global(body) {
		margin: 0;
		background: #ebebeb;
	}

	.app {
		display: flex;
		flex-direction: column;
		height: 100vh;
		overflow: hidden;
		background: #ebebeb;
		color: #262626;
		font-family: Inter, 'Liberation Sans', sans-serif;
		font-size: 24px;
	}

	button,
	select,
	input {
		margin: 0;
		padding: 0;
		border: 0;
		background: none;
		color: inherit;
		font: inherit;
	}

	.notch {
		flex: none;
		height: 74px;
		background: #000;
	}

	.toolbar {
		display: flex;
		flex: none;
		align-items: center;
		gap: 4px;
		height: 68px;
		padding-left: 10px;
	}

	.tool {
		position: relative;
		display: grid;
		place-items: center;
		flex: none;
		box-sizing: border-box;
		width: 60px;
		height: 60px;
		border: 2px solid transparent;
	}

	.tool.active {
		border-color: #b3d3fa;
		background: #e6effe;
	}

	.tool svg {
		width: 48px;
		height: 48px;
		overflow: visible;
	}

	.pair {
		width: 64px;
	}

	.sep {
		flex: none;
		width: 2px;
		height: 44px;
		margin: 0 6px;
		background: #b5b5b5;
	}

	.more {
		position: absolute;
		right: -2px;
		bottom: -2px;
		width: 14px;
		height: 14px;
		background: #1c1c1c;
		clip-path: polygon(100% 0, 100% 100%, 0 100%);
	}

	.picker {
		position: relative;
		display: block;
		flex: none;
		height: 40px;
		border-radius: 10px;
		background: #fff;
		box-shadow: 0 1px 2px rgba(0, 0, 0, 0.35);
	}

	.picker select {
		width: 100%;
		height: 40px;
		padding: 0 0 2px 16px;
		font-size: 25px;
		appearance: none;
	}

	.track {
		width: 370px;
	}

	.via {
		width: 358px;
	}

	.grid {
		width: 400px;
	}

	.zoom {
		width: 228px;
	}

	.stepper {
		position: absolute;
		top: 4px;
		right: 4px;
		width: 32px;
		height: 32px;
		border-radius: 8px;
		background: linear-gradient(#4a92fb, #3273f4);
		pointer-events: none;
	}

	.stepper path,
	.combo-arrow path {
		fill: none;
		stroke: #fff;
		stroke-width: 3;
		stroke-linecap: round;
		stroke-linejoin: round;
	}

	.combo {
		display: flex;
		align-items: center;
		gap: 10px;
	}

	.combo-box {
		display: flex;
		align-items: center;
		gap: 10px;
		box-sizing: border-box;
		width: 302px;
		height: 44px;
		padding-left: 8px;
		border: 2px solid #8a8a8a;
		background: #fff;
	}

	.combo-swatch {
		flex: none;
		box-sizing: border-box;
		width: 28px;
		height: 28px;
		border: 2px solid #000;
		background: #d6c864;
	}

	.combo-box input {
		min-width: 0;
		font-size: 25px;
		outline: none;
	}

	.combo-arrow {
		width: 40px;
		height: 40px;
		border-radius: 10px;
		background: #fff;
		box-shadow: 0 1px 2px rgba(0, 0, 0, 0.35);
	}

	.combo-arrow svg {
		display: block;
	}

	.combo-arrow path {
		stroke: #222;
	}

	.main {
		display: flex;
		flex: 1;
		min-height: 0;
	}

	.side {
		display: flex;
		flex: none;
		flex-direction: column;
		gap: 4px;
		box-sizing: border-box;
		padding: 9px 0 0 4px;
	}

	.side .sep {
		width: 44px;
		height: 2px;
		margin: 6px 8px;
	}

	.left {
		width: 68px;
	}

	.right {
		width: 66px;
	}

	.canvas {
		flex: 1;
		min-width: 0;
		overflow: hidden;
		border: 2px solid #a9a9a9;
		border-bottom-width: 1px;
		background: #001023;
	}

	.canvas svg {
		display: block;
		width: 100%;
		height: 100%;
	}

	.edge {
		fill: none;
		stroke: #d0d2cd;
	}

	.ring {
		fill: none;
		stroke: #f2eda1;
	}

	.dim {
		fill: none;
		stroke: #d6c64c;
	}

	.dim-text {
		fill: #e0d050;
		font-family: 'DejaVu Sans Mono', monospace;
		font-size: 20px;
		text-anchor: middle;
	}

	.copper {
		fill: #5a6dae;
		font-family: 'DejaVu Sans Mono', monospace;
		font-size: 64px;
		text-anchor: middle;
	}

	.copper text {
		stroke: #5a6dae;
		stroke-width: 3;
	}

	.copper .thick {
		stroke-width: 14;
		font-size: 54px;
	}

	.copper .small {
		stroke-width: 1;
		font-family: 'Liberation Sans Narrow', 'DejaVu Sans Condensed', sans-serif;
		font-size: 38px;
	}

	.back-silk {
		fill: #e8b2a7;
		stroke: #e8b2a7;
		font-family: 'DejaVu Sans', sans-serif;
		font-size: 30px;
		text-anchor: middle;
	}

	.silk {
		fill: none;
		stroke: #f2eda1;
		stroke-width: 4;
		stroke-linecap: round;
		stroke-linejoin: round;
	}

	.ref {
		fill: #f2eda1;
		stroke: #f2eda1;
		stroke-width: 2;
		font-family: 'DejaVu Sans Mono', monospace;
		font-size: 56px;
		text-anchor: middle;
	}

	.sash {
		display: grid;
		flex: none;
		place-items: center;
		width: 16px;
	}

	.grip {
		width: 12px;
		height: 12px;
		border-radius: 50%;
		background: #d5d5d5;
	}

	.panel {
		display: flex;
		flex: none;
		flex-direction: column;
		box-sizing: border-box;
		width: 360px;
		overflow: hidden;
		border-left: 1px solid #d0d0d0;
	}

	h2 {
		flex: none;
		box-sizing: border-box;
		height: 34px;
		margin: 0;
		padding-left: 6px;
		background: #c3c3c3;
		font-size: 22px;
		font-weight: 400;
		line-height: 32px;
	}

	.notebook {
		display: flex;
		flex: 1;
		flex-direction: column;
		min-height: 0;
		margin-top: 44px;
		border: 1px solid #dadada;
		border-left: 0;
		border-radius: 12px;
		background: #e4e4e4;
	}

	.tabs {
		display: grid;
		flex: none;
		grid-template-columns: 116fr 125fr 100fr;
		box-sizing: border-box;
		height: 44px;
		margin: -20px 7px 10px 10px;
		padding: 1px;
		border: 1px solid #d4d4d4;
		border-radius: 12px;
		background: #dfdfdf;
	}

	.tabs button {
		padding-bottom: 2px;
		border-radius: 10px;
	}

	.tabs button:last-child {
		border-radius: 0;
		background: linear-gradient(#c6c6c6, #c6c6c6) left center / 2px 24px no-repeat;
	}

	.tabs [aria-selected='true'] {
		background: #fff;
		box-shadow: 0 1px 2px rgba(0, 0, 0, 0.4);
	}

	.layers {
		display: flex;
		flex: 1;
		min-height: 0;
		margin: 0 7px 0 5px;
		background: #e9e9e9;
	}

	ul {
		flex: 1;
		margin: 0 2px 0 0;
		padding: 0;
		overflow: hidden;
		list-style: none;
	}

	li {
		display: flex;
		align-items: center;
		box-sizing: border-box;
		height: 36px;
		padding: 4px 0 0 12px;
		white-space: nowrap;
	}

	li.current {
		background: #f8f8f8;
	}

	.marker {
		width: 12px;
		height: 22px;
		margin-right: 12px;
		clip-path: polygon(0 0, 100% 50%, 0 100%);
	}

	.current .marker {
		background: #4048f5;
	}

	.swatch {
		width: 32px;
		height: 24px;
		margin-right: 12px;
	}

	.eye {
		width: 32px;
		height: 32px;
		margin-right: 10px;
	}

	.scroll {
		width: 26px;
		padding-top: 6px;
		box-sizing: border-box;
		background: #fafafa;
	}

	.thumb {
		width: 16px;
		height: 96%;
		margin: 0 auto;
		border-radius: 8px;
		background: #7f7f7f;
	}

	.display-options {
		display: flex;
		flex: none;
		align-items: center;
		gap: 6px;
		height: 50px;
		padding-left: 28px;
	}

	.display-options i {
		width: 10px;
		height: 18px;
		background: #1c1c1c;
		clip-path: polygon(0 0, 100% 50%, 0 100%);
	}

	.views {
		display: grid;
		flex: none;
		gap: 3px;
		padding: 8px 14px 0 13px;
		line-height: 30px;
	}

	.views > span:nth-child(3) {
		margin-top: 6px;
	}

	.viewport {
		position: relative;
	}

	.viewport i {
		position: absolute;
		top: 20px;
		left: 16px;
		right: 42px;
		height: 2px;
		background: #d9d9d9;
	}

	.row-sash {
		display: flex;
		flex: none;
		align-items: flex-end;
		justify-content: center;
		height: 26px;
	}

	.filters {
		display: grid;
		flex: none;
		grid-template-columns: 200px 200px;
		padding: 10px 0 9px 9px;
	}

	.filters label {
		display: flex;
		align-items: center;
		gap: 12px;
		height: 32px;
		white-space: nowrap;
	}

	.filters input {
		width: 28px;
		height: 28px;
		border: 1px solid #c4c4c4;
		border-radius: 7px;
		background: #fff;
		box-sizing: border-box;
		appearance: none;
	}

	.filters input:checked {
		display: grid;
		place-items: center;
		border: 0;
		background: linear-gradient(#4a92fb, #3273f4);
	}

	.filters input:checked::before {
		content: '';
		width: 7px;
		height: 15px;
		margin-bottom: 4px;
		border: solid #fff;
		border-width: 0 4px 4px 0;
		border-radius: 2px;
		transform: rotate(38deg);
	}

	.info {
		display: flex;
		flex: none;
		gap: 60px;
		box-sizing: border-box;
		height: 66px;
		padding: 5px 22px 0;
		font-size: 22px;
		line-height: 32px;
	}

	footer {
		display: grid;
		flex: none;
		grid-template-columns: 1026fr 143fr 315fr 502fr 361fr 677fr;
		align-items: center;
		box-sizing: border-box;
		height: 55px;
		border-top: 2px solid #c9c9c9;
		background: linear-gradient(#ebebeb, #d2d2d2);
		color: #4d4d4d;
		font-size: 22px;
		white-space: nowrap;
	}
</style>
